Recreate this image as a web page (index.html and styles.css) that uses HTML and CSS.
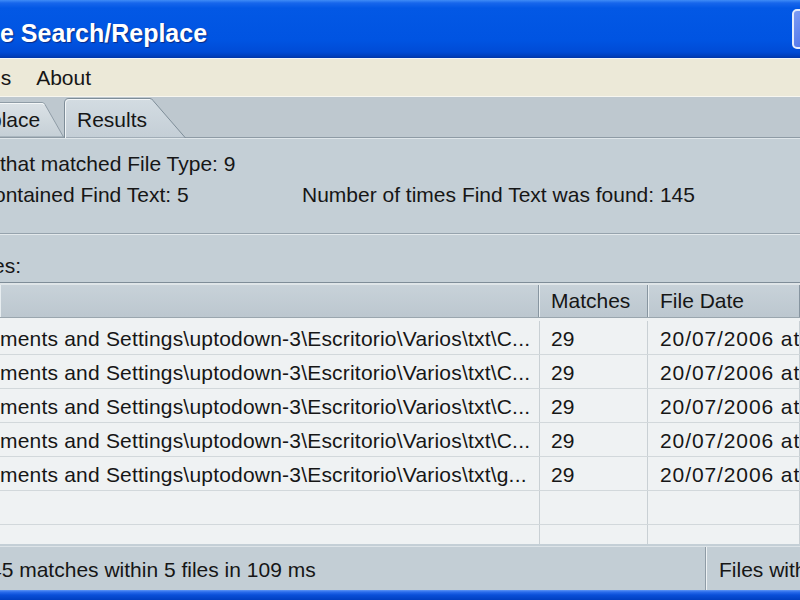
FILE: index.html
```html
<!DOCTYPE html>
<html>
<head>
<meta charset="utf-8">
<link rel="stylesheet" href="styles.css">
</head>
<body>
<div class="window">
  <header class="titlebar">
    <span class="title">e Search/Replace</span>
    <span class="winbtn"></span>
  </header>
  <nav class="menubar">
    <span class="menu-item menu-cut">ns</span>
    <span class="menu-item">About</span>
  </nav>
  <div class="tabstrip">
    <div class="tab tab-inactive">
      <svg class="tab-shape" width="64" height="35" viewBox="0 0 64 35">
        <defs>
          <linearGradient id="gi" x1="0" y1="0" x2="0" y2="1">
            <stop offset="0" stop-color="#dbe2e6"/>
            <stop offset="1" stop-color="#c5cfd6"/>
          </linearGradient>
        </defs>
        <path d="M-2,35 V0.5 H42 Q44,0.5 45,2.5 L63.5,35 Z" fill="url(#gi)" stroke="#8f9ca6" stroke-width="1"/>
        <path d="M-2,1.5 H42 Q43.5,1.5 44,3" fill="none" stroke="#f4f7f8" stroke-width="1"/>
      </svg>
      <span class="tab-label">place</span>
    </div>
    <div class="tab tab-active">
      <svg class="tab-shape" width="122" height="40" viewBox="0 0 122 40">
        <defs>
          <linearGradient id="ga" x1="0" y1="0" x2="0" y2="1">
            <stop offset="0" stop-color="#d3dce2"/>
            <stop offset="1" stop-color="#c4ced6"/>
          </linearGradient>
        </defs>
        <path d="M0.5,40 V5 Q0.5,0.5 5,0.5 H86 Q88,0.5 89,2.5 L121.5,40 Z" fill="url(#ga)" stroke="#7e8d98" stroke-width="1"/>
        <path d="M1.5,40 V5 Q1.5,1.5 5,1.5 H86" fill="none" stroke="#f2f5f7" stroke-width="1"/>
      </svg>
      <span class="tab-label">Results</span>
    </div>
  </div>
  <section class="panel">
    <div class="stat">that matched File Type: 9</div>
    <div class="stat-row">
      <span class="shift-left">ontained Find Text: 5</span>
      <span>Number of times Find Text was found: 145</span>
    </div>
    <div class="groove"></div>
    <div class="label">es:</div>
  </section>
  <div class="list">
    <div class="list-head">
      <div class="hcell"></div>
      <div class="hcell">Matches</div>
      <div class="hcell">File Date</div>
    </div>
    <div class="rows">
      <div class="row"><div class="cell cell-path">ments and Settings\uptodown-3\Escritorio\Varios\txt\C...</div><div class="cell">29</div><div class="cell cell-date">20/07/2006 at</div></div>
      <div class="row"><div class="cell cell-path">ments and Settings\uptodown-3\Escritorio\Varios\txt\C...</div><div class="cell">29</div><div class="cell cell-date">20/07/2006 at</div></div>
      <div class="row"><div class="cell cell-path">ments and Settings\uptodown-3\Escritorio\Varios\txt\C...</div><div class="cell">29</div><div class="cell cell-date">20/07/2006 at</div></div>
      <div class="row"><div class="cell cell-path">ments and Settings\uptodown-3\Escritorio\Varios\txt\C...</div><div class="cell">29</div><div class="cell cell-date">20/07/2006 at</div></div>
      <div class="row"><div class="cell cell-path">ments and Settings\uptodown-3\Escritorio\Varios\txt\g...</div><div class="cell">29</div><div class="cell cell-date">20/07/2006 at</div></div>
      <div class="row"><div class="cell cell-path"></div><div class="cell"></div><div class="cell"></div></div>
      <div class="row"><div class="cell cell-path"></div><div class="cell"></div><div class="cell"></div></div>
    </div>
  </div>
  <footer class="statusbar">
    <div class="status-panel status-main"><span class="status-text">45 matches within 5 files in 109 ms</span></div>
    <div class="status-panel status-side">Files with</div>
  </footer>
  <div class="frame-bottom"></div>
</div>
</body>
</html>
```
FILE: styles.css
```css
html, body {
  margin: 0;
  padding: 0;
}
body {
  width: 800px;
  height: 600px;
  overflow: hidden;
  font-family: "Liberation Sans", Arial, sans-serif;
  font-size: 21px;
  color: #161616;
  background: #c4cfd6;
}
.window {
  display: flex;
  flex-direction: column;
  height: 600px;
}

/* Title bar */
.titlebar {
  flex: none;
  height: 58px;
  display: flex;
  align-items: center;
  justify-content: space-between;
  background: linear-gradient(#3f8cf6 0, #1766ec 3px, #0358e5 8px, #0054e2 40px, #004bd6 52px, #003fbd 56px, #0036a8 58px);
}
.title {
  font-weight: bold;
  font-size: 25px;
  color: #ffffff;
  text-shadow: 1px 1px 1px #0b2c86;
  margin-top: 8px;
  white-space: nowrap;
}
.winbtn {
  width: 40px;
  height: 40px;
  margin-right: -32px;
  box-sizing: border-box;
  border: 2px solid #e4ecfb;
  border-radius: 5px;
  background: linear-gradient(135deg, #7c9cf4, #3a62e4);
}

/* Menu bar */
.menubar {
  flex: none;
  height: 37px;
  border-top: 1px solid #f3f5f9;
  border-bottom: 1px solid #f7f6ef;
  background: #ece9d8;
  display: flex;
  align-items: center;
  gap: 25px;
}
.menu-item {
  white-space: nowrap;
}
.menu-cut {
  margin-left: -11px;
}

/* Tabs */
.tabstrip {
  flex: none;
  height: 40px;
  border-bottom: 1px solid #8e9ba5;
  background: #bec8cf;
  display: flex;
  align-items: flex-end;
}
.tab {
  position: relative;
  display: flex;
  align-items: center;
  box-sizing: border-box;
}
.tab-shape {
  position: absolute;
  left: 0;
  top: 0;
  z-index: 0;
}
.tab-label {
  position: relative;
  z-index: 1;
  white-space: nowrap;
}
.tab-inactive {
  width: 64px;
  height: 35px;
  padding-top: 1px;
}
.tab-inactive .tab-label {
  margin-left: -10px;
}
.tab-active {
  width: 122px;
  height: 40px;
  margin-bottom: -1px;
  padding-left: 13px;
  padding-top: 3px;
  z-index: 2;
}

/* Summary panel */
.panel {
  flex: none;
  padding-top: 9px;
  padding-bottom: 1px;
  border-top: 1px solid #dfe6ea;
  background: #c4cfd6;
}
.stat, .stat-row, .label {
  line-height: 31px;
  white-space: nowrap;
}
.stat-row {
  display: grid;
  grid-template-columns: 302px auto;
}
.shift-left {
  margin-left: -6px;
}
.groove {
  margin-top: 23px;
  height: 1px;
  border-top: 1px solid #96a3ad;
  background: #e3e9ec;
}
.label {
  margin-top: 15px;
  margin-left: -7px;
}

/* List */
.list {
  flex: 1;
  min-height: 0;
  display: flex;
  flex-direction: column;
  border-top: 1px solid #7f8d98;
  background: #dfe5e8;
  padding-top: 2px;
  overflow: hidden;
}
.list-head {
  flex: none;
  display: grid;
  grid-template-columns: 539px 109px 1fr;
  height: 32px;
  border-bottom: 1px solid #9aa6ae;
  background: linear-gradient(#c8d2d9, #bcc7cf);
}
.hcell {
  display: flex;
  align-items: center;
  padding-left: 12px;
  border-right: 1px solid #8795a0;
  box-shadow: inset 1px 0 #e7edf0;
  white-space: nowrap;
}
.rows {
  flex: 1;
  min-height: 0;
  background: #eff2f3;
  padding-top: 3px;
  overflow: hidden;
}
.row {
  display: grid;
  grid-template-columns: 540px 108px 1fr;
  height: 33px;
  border-bottom: 1px solid #d2d8db;
}
.cell {
  display: flex;
  align-items: center;
  padding-left: 11px;
  padding-top: 3px;
  border-right: 1px solid #c9d0d4;
  white-space: nowrap;
  overflow: hidden;
}
.cell-path {
  padding-left: 0;
  letter-spacing: 0.2px;
}
.cell-date {
  padding-left: 12px;
  letter-spacing: 0.9px;
}

/* Status bar */
.statusbar {
  flex: none;
  height: 43px;
  margin-top: 2px;
  display: flex;
  background: #c3ced5;
  border-top: 1px solid #dde4e8;
}
.status-panel {
  display: flex;
  align-items: center;
  white-space: nowrap;
  padding-top: 3px;
}
.status-main {
  flex: none;
  width: 705px;
  border-right: 1px solid #8f9ca6;
  box-shadow: 1px 0 #eef2f4;
}
.status-text {
  margin-left: -10px;
}
.status-side {
  flex: 1;
  min-width: 0;
  padding-left: 13px;
}

.frame-bottom {
  flex: none;
  height: 10px;
  background: linear-gradient(#5d95f4 0, #2a6cec 2px, #0a4fd8 5px, #003fc0 10px);
}
```
